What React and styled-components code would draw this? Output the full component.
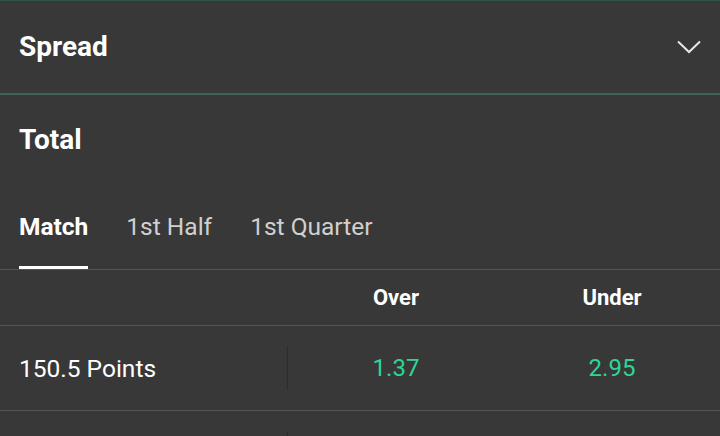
import React, { useState } from 'react';
import styled, { createGlobalStyle } from 'styled-components';

const GlobalStyle = createGlobalStyle`
  html, body {
    margin: 0;
    padding: 0;
    background: #383838;
  }
  body {
    font-family: Roboto, "Liberation Sans", sans-serif;
    color: #ffffff;
  }
`;

const Page = styled.div`
  width: 720px;
  height: 436px;
  overflow: hidden;
  background: #383838;
  border-top: 1px solid #2f5446;
`;

const SectionHeader = styled.div`
  display: flex;
  align-items: center;
  justify-content: space-between;
  height: 92px;
  padding: 0 19px;
  border-bottom: 2px solid #3c6654;
`;

const SectionTitle = styled.h2`
  margin: 0;
  font-size: 28px;
  line-height: 32px;
  font-weight: 700;
  color: #ffffff;
`;

const Chevron = styled.svg`
  width: 24px;
  height: 14px;
`;

const TotalBlock = styled.div`
  padding: 29px 19px 0;
`;

const Tabs = styled.div`
  display: flex;
  gap: 38px;
  padding: 0 19px;
  margin-top: 57px;
  border-bottom: 1px solid #545454;
`;

const Tab = styled.button`
  background: none;
  border: none;
  padding: 0 0 25px;
  font-family: inherit;
  font-size: 24.5px;
  line-height: 28px;
  font-weight: ${p => (p.$active ? 700 : 400)};
  color: ${p => (p.$active ? '#ffffff' : '#d0d0d0')};
  border-bottom: 3px solid ${p => (p.$active ? '#ffffff' : 'transparent')};
  cursor: pointer;
`;

const Grid = styled.div`
  display: grid;
  grid-template-columns: 288px 216px 216px;
`;

const HeadRow = styled(Grid)`
  height: 55px;
  align-items: center;
  border-bottom: 1px solid #545454;
`;

const HeadCell = styled.div`
  text-align: center;
  font-size: 22px;
  font-weight: 700;
  color: #ffffff;
`;

const Row = styled(Grid)`
  height: 84px;
  align-items: center;
  border-bottom: 1px solid #545454;
`;

const Label = styled.div`
  padding-left: 19px;
  font-size: 24.5px;
  color: #ffffff;
  height: 44px;
  display: flex;
  align-items: center;
  border-right: 1px solid #2c2c2c;
`;

const Odds = styled.div`
  text-align: center;
  font-size: 24px;
  color: #2cd696;
`;

const rows = [
  { label: '150.5 Points', over: '1.37', under: '2.95' },
  { label: '', over: '', under: '' },
];

export default function App() {
  const [tab, setTab] = useState('Match');
  return (
    <Page>
      <GlobalStyle />
      <SectionHeader>
        <SectionTitle>Spread</SectionTitle>
        <Chevron viewBox="0 0 24 14" fill="none">
          <path d="M1 1.5 L12 12 L23 1.5" stroke="#e6e6e6" strokeWidth="2" />
        </Chevron>
      </SectionHeader>
      <TotalBlock>
        <SectionTitle>Total</SectionTitle>
      </TotalBlock>
      <Tabs>
        {['Match', '1st Half', '1st Quarter'].map(t => (
          <Tab key={t} $active={tab === t} onClick={() => setTab(t)}>
            {t}
          </Tab>
        ))}
      </Tabs>
      <HeadRow>
        <div />
        <HeadCell>Over</HeadCell>
        <HeadCell>Under</HeadCell>
      </HeadRow>
      {rows.map((r, i) => (
        <Row key={i}>
          <Label>{r.label}</Label>
          <Odds>{r.over}</Odds>
          <Odds>{r.under}</Odds>
        </Row>
      ))}
    </Page>
  );
}
